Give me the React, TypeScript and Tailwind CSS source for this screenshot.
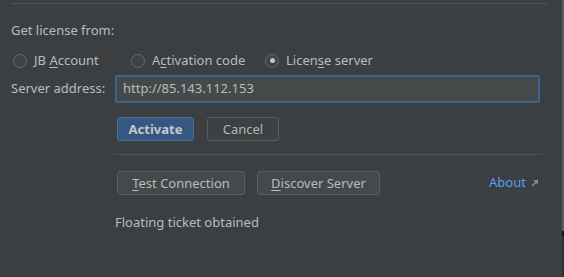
import React from "react";

function Radio({ checked }: { checked?: boolean }) {
  return (
    <span className="w-[14px] h-[14px] rounded-full border border-[#666a6c] bg-[#3f4345] flex items-center justify-center shrink-0">
      {checked && <span className="w-[5px] h-[5px] rounded-full bg-[#c4c4c4]" />}
    </span>
  );
}

export default function App() {
  return (
    <div
      className="w-[564px] h-[277px] bg-[#3c3f41] text-[#bbbbbb] text-[13px] flex overflow-hidden"
      style={{ fontFamily: '"Noto Sans", "DejaVu Sans", sans-serif' }}
    >
      <div className="flex-1 pt-[3px]">
        <div className="h-px w-[536px] ml-[11px] bg-[#515353]" />
        <div className="pl-[11px]">
          <div className="mt-[18px] leading-[17px]">Get license from:</div>
          <div className="mt-[13px] h-[17px] flex items-center leading-[17px]">
            <div className="w-[118px] flex items-center ml-[2px]">
              <Radio />
              <span className="ml-[7px]">
                JB <u className="underline-offset-2">A</u>ccount
              </span>
            </div>
            <div className="w-[134px] flex items-center">
              <Radio />
              <span className="ml-[7px]">
                A<u className="underline-offset-2">c</u>tivation code
              </span>
            </div>
            <div className="flex items-center">
              <Radio checked />
              <span className="ml-[7px]">
                Licen<u className="underline-offset-2">s</u>e server
              </span>
            </div>
          </div>
          <div className="mt-[6px] h-[28px] flex items-center">
            <div className="w-[104px]">Server address:</div>
            <div className="w-[425px] h-[28px] border-2 border-[#3d6490] rounded-[2px] bg-[#45494a] flex items-center pl-[6px]">
              http://85.143.112.153
            </div>
          </div>
          <div className="mt-[14px] ml-[106px] flex gap-[13px]">
            <button className="w-[77px] h-[24px] rounded-[3px] bg-[#365880] border border-[#4a6e92] font-bold text-[#c2c8ce] leading-none">
              Activate
            </button>
            <button className="w-[72px] h-[24px] rounded-[3px] bg-[#3e4143] border border-[#5b5e60] text-[#b4b4b4] leading-none">
              Cancel
            </button>
          </div>
          <div className="mt-[13px] ml-[103px] w-[428px] h-px bg-[#515353]" />
          <div className="mt-[16px] ml-[106px] flex items-center h-[24px]">
            <button className="w-[128px] h-[24px] rounded-[3px] bg-[#45494b] border border-[#5b5e60] leading-none">
              <u className="underline-offset-2">T</u>est Connection
            </button>
            <button className="ml-[12px] w-[123px] h-[24px] rounded-[3px] bg-[#45494b] border border-[#5b5e60] leading-none">
              <u className="underline-offset-2">D</u>iscover Server
            </button>
            <div className="ml-[109px] flex items-center">
              <span className="text-[#589df6]">About</span>
              <svg width="8" height="8" viewBox="0 0 8 8" className="ml-[5px]">
                <path d="M1 7 L6.5 1.5" stroke="#8c8c8c" strokeWidth="1.4" />
                <path d="M2.5 1 H7 V5.5 Z" fill="#8c8c8c" />
              </svg>
            </div>
          </div>
          <div className="mt-[19px] ml-[104px] leading-[17px]">Floating ticket obtained</div>
        </div>
      </div>
      <div className="w-[2px] flex flex-col">
        <div className="h-[231px] bg-[#5b5d5f]" />
        <div className="h-[5px] bg-[#111111]" />
        <div className="flex-1 bg-[#2f3133]" />
      </div>
    </div>
  );
}
